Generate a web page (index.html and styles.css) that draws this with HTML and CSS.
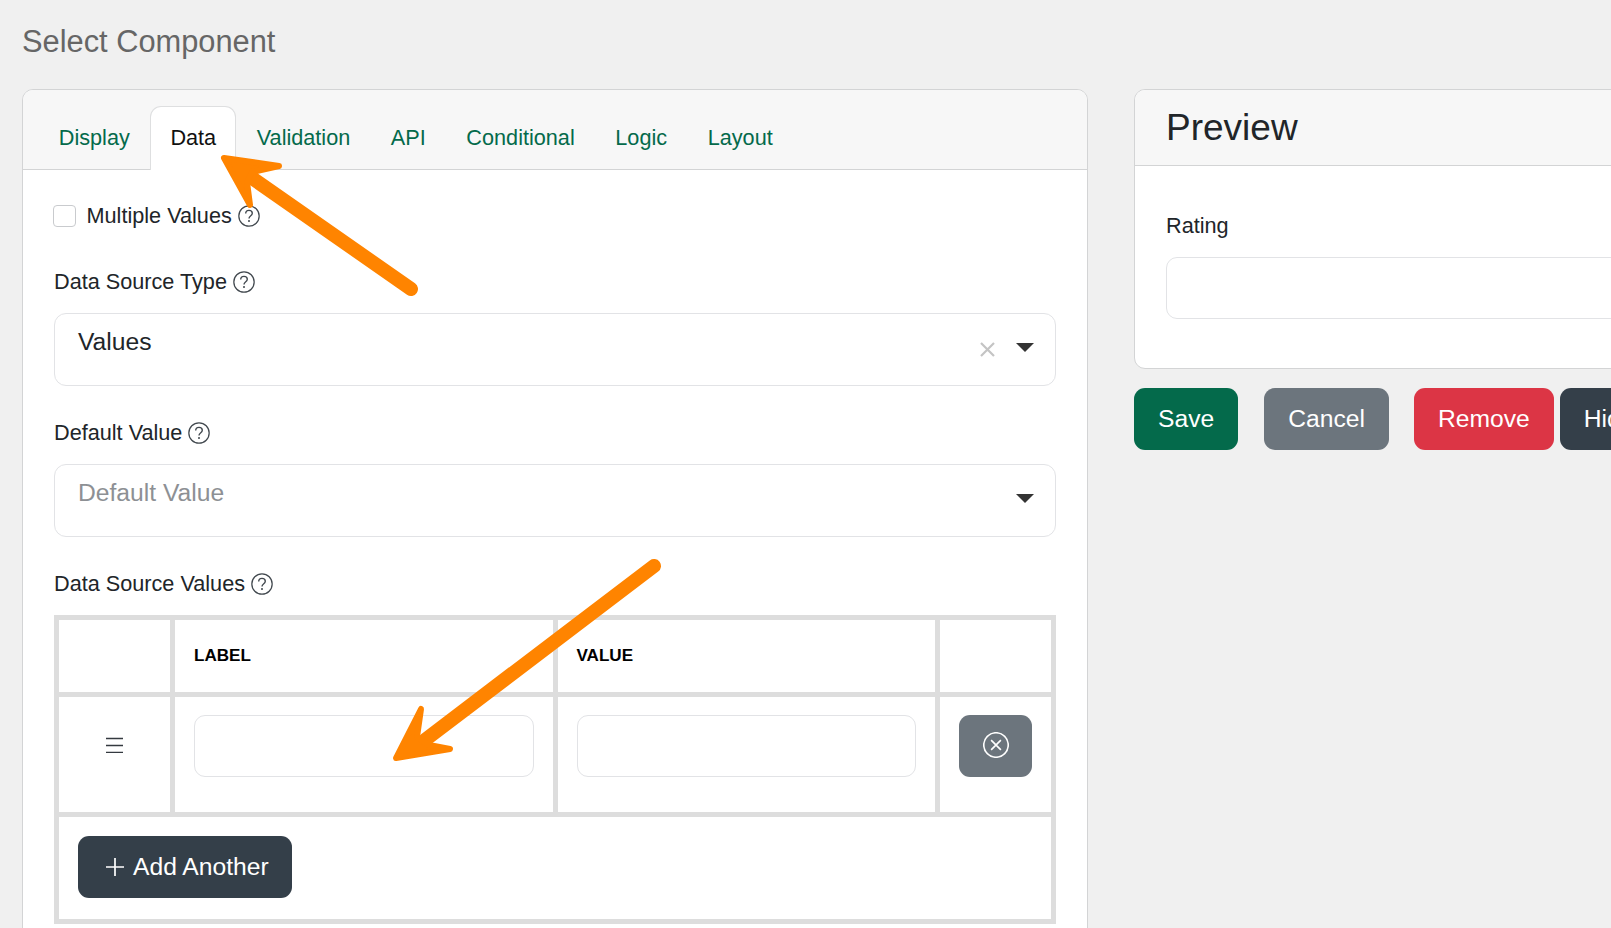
FILE: index.html
```html
<!DOCTYPE html>
<html lang="en">
<head>
<meta charset="utf-8">
<title>Select Component</title>
<link rel="stylesheet" href="styles.css">
</head>
<body>
<svg width="0" height="0" class="defs">
  <symbol id="help" viewBox="0 0 16 16">
    <circle cx="8" cy="8" r="7.4" fill="none" stroke="currentColor" stroke-width="0.9"/>
    <path d="M5.6 6.200c0-1.500 1.100-2.300 2.400-2.300s2.400.8 2.400 2.100c0 1-.6 1.500-1.300 2-.7.5-1.100.9-1.100 1.800" fill="none" stroke="currentColor" stroke-width="1"/>
    <circle cx="8" cy="11.600" r="0.75" fill="currentColor"/>
  </symbol>
</svg>
<h1 class="page-title">Select Component</h1>
<main class="layout">
  <section class="card editor">
    <nav class="card-header tabs">
      <a class="tab">Display</a>
      <a class="tab active">Data</a>
      <a class="tab">Validation</a>
      <a class="tab">API</a>
      <a class="tab">Conditional</a>
      <a class="tab">Logic</a>
      <a class="tab">Layout</a>
    </nav>
    <div class="editor-body">
      <label class="check-row">
        <span class="checkbox"></span>
        <span>Multiple Values</span>
        <svg class="help"><use href="#help"/></svg>
      </label>
      <div class="field">
        <div class="field-label"><span>Data Source Type</span><svg class="help"><use href="#help"/></svg></div>
        <div class="select">
          <span class="select-value">Values</span>
          <svg class="clear" viewBox="0 0 15 15"><path d="M1 1l13 13M14 1L1 14"/></svg>
          <span class="caret"></span>
        </div>
      </div>
      <div class="field">
        <div class="field-label"><span>Default Value</span><svg class="help"><use href="#help"/></svg></div>
        <div class="select">
          <span class="select-value placeholder">Default Value</span>
          <span class="caret"></span>
        </div>
      </div>
      <div class="field">
        <div class="field-label"><span>Data Source Values</span><svg class="help"><use href="#help"/></svg></div>
        <table class="grid">
          <colgroup><col class="c-handle"><col class="c-text"><col class="c-text"><col class="c-handle"></colgroup>
          <thead>
            <tr class="head-row"><th></th><th>LABEL</th><th>VALUE</th><th></th></tr>
          </thead>
          <tbody>
            <tr class="data-row">
              <td class="handle-cell">
                <svg class="handle" viewBox="0 0 17 16"><path d="M0 1.500h17M0 8.500h17M0 15.500h17"/></svg>
              </td>
              <td><div class="input"></div></td>
              <td><div class="input"></div></td>
              <td>
                <button class="btn btn-grey btn-remove-row" type="button">
                  <svg class="x-circle" viewBox="0 0 24 24"><circle cx="12" cy="12" r="11.300"/><path d="M7.500 7.500l9 9M16.500 7.500l-9 9"/></svg>
                </button>
              </td>
            </tr>
            <tr class="foot-row">
              <td colspan="4">
                <button class="btn btn-dark add" type="button">
                  <svg class="plus" viewBox="0 0 24 24"><path d="M13 3v18M4 12h18"/></svg>Add Another
                </button>
              </td>
            </tr>
          </tbody>
        </table>
      </div>
    </div>
  </section>
  <aside class="side">
    <section class="card">
      <div class="card-header preview-head">Preview</div>
      <div class="preview-body">
        <div class="rating-label">Rating</div>
        <div class="input"></div>
      </div>
    </section>
    <div class="actions">
      <button class="btn btn-green" type="button">Save</button>
      <button class="btn btn-grey" type="button">Cancel</button>
      <button class="btn btn-red" type="button">Remove</button>
      <button class="btn btn-dark" type="button">Hide</button>
    </div>
  </aside>
</main>
<svg class="annotations" viewBox="0 0 1611 928">
  <g class="arrow">
    <path class="shaft" d="M252 178L411 289"/>
    <path class="head" d="M224 158L279 166L252 172L247 182L250 205Z"/>
    <path class="shaft" d="M654 566L425 740"/>
    <path class="head" d="M396 758L421 709L417 737L429 745L450 749Z"/>
  </g>
</svg>
</body>
</html>
```
FILE: styles.css
```css
* { box-sizing: border-box; }
html, body { height: 928px; overflow: hidden; }
body {
  margin: 0;
  padding: 0 0 0 22px;
  position: relative;
  width: 1611px;
  background: #f0f0f0;
  color: #212529;
  font-family: "Liberation Sans", Arial, sans-serif;
  font-size: 21.67px;
  line-height: 32px;
}
.defs { position: absolute; }
.page-title {
  margin: 0;
  padding-top: 22.500px;
  height: 88.500px;
  font-size: 30.800px;
  line-height: 37px;
  font-weight: 400;
  color: #666;
}
.layout { display: flex; gap: 46.500px; align-items: flex-start; }
.card {
  background: #fff;
  border: 1px solid #d3d4d5;
  border-radius: 11px;
  overflow: hidden;
}
.editor { flex: none; width: 1065.500px; height: 900px; }
.side { flex: none; width: 620px; }
.card-header { background: #f7f7f7; border-bottom: 1px solid #d3d4d5; }
.tabs { display: flex; height: 80px; padding: 16.500px 0 0 15.500px; }
.tab {
  height: 63.500px;
  padding: 14.500px 19.300px;
  border: 1px solid transparent;
  border-bottom: 0;
  border-radius: 11px 11px 0 0;
  color: #046a4b;
}
.tab.active { background: #fff; border-color: #dedfe0; color: #111; position: relative; }
.editor-body { padding: 30px 31px 0 31px; }
.check-row { display: flex; align-items: center; height: 32px; margin-bottom: 34px; }
.checkbox {
  width: 23px;
  height: 22px;
  margin: 0 10.500px 0 -1px;
  background: #fff;
  border: 1px solid #c9cbce;
  border-radius: 4px;
}
.help { flex: none; width: 22px; height: 22px; margin-left: 6px; color: #41484e; }
.field { margin-top: 31px; }
.field-label { display: flex; align-items: center; height: 32px; margin-bottom: 15px; }
.select {
  display: flex;
  align-items: center;
  height: 73px;
  padding: 0 21px 0 23px;
  border: 1px solid #e2e3e6;
  border-radius: 12px;
}
.select-value { flex: 1; font-size: 24.670px; line-height: 36px; margin-top: -14.500px; }
.placeholder { color: #8d9094; }
.clear { width: 15px; height: 15px; margin-right: 21px; fill: none; stroke: #c4c4c4; stroke-width: 2.200; }
.caret {
  width: 0;
  height: 0;
  margin-top: -3px;
  border-style: solid;
  border-width: 9px 9px 0 9px;
  border-color: #333 transparent transparent transparent;
}
.grid {
  width: 1002px;
  table-layout: fixed;
  border-collapse: collapse;
  border: 5px solid #ddd;
}
.c-handle { width: 116px; }
.c-text { width: 382.500px; }
.grid th, .grid td { border: 5px solid #ddd; padding: 19px; }
.grid th {
  height: 77px;
  text-align: left;
  font-size: 17.070px;
  line-height: 24px;
  color: #000;
}
.grid td { vertical-align: top; }
.grid .data-row td { padding-top: 18px; }
.grid .foot-row td { padding: 19px 19px 21px; }
.input {
  height: 62px;
  margin-bottom: 16.500px;
  background: #fff;
  border: 1px solid #e2e3e6;
  border-radius: 11px;
}
.handle-cell { text-align: center; }
.grid .data-row .handle-cell { padding-top: 40px; }
.handle { display: block; width: 17px; height: 16px; margin: 0 auto; fill: none; stroke: #343a40; stroke-width: 1.300; }
.btn {
  height: 62px;
  padding: 0 24px;
  border: 0;
  border-radius: 11px;
  color: #fff;
  font-family: inherit;
  font-size: 24.670px;
  line-height: 36px;
}
.btn-green { background: #046a4b; }
.btn-grey { background: #6c757d; }
.btn-red { background: #dc3545; }
.btn-dark { background: #343f49; }
.btn-remove-row { display: flex; align-items: center; justify-content: center; width: 73px; padding: 0; margin: 0; }
.x-circle { width: 26px; height: 26px; margin-top: -2px; fill: none; stroke: #fff; stroke-width: 1.500; }
.add { display: block; width: 214px; text-align: left; white-space: nowrap; }
.plus { width: 24px; height: 24px; margin-right: 7px; vertical-align: -4px; fill: none; stroke: #fff; stroke-width: 1.700; }
.preview-head { height: 76px; padding: 15px 31px 0; font-size: 37px; line-height: 46px; }
.preview-body { height: 202px; padding: 44px 31px 0; }
.rating-label { margin-bottom: 15px; }
.preview-body .input { margin: 0; }
.actions { display: flex; margin-top: 19px; }
.actions .btn { flex: none; }
.btn-grey:nth-child(2) { margin-left: 26px; }
.btn-red { margin-left: 25px; }
.btn-red + .btn-dark { margin-left: 6px; }
.annotations { position: absolute; left: 0; top: 0; width: 1611px; height: 928px; pointer-events: none; }
.arrow { stroke: #ff8400; stroke-linecap: round; stroke-linejoin: round; fill: #ff8400; }
.shaft { stroke-width: 14px; fill: none; }
.head { stroke-width: 6px; }
```
